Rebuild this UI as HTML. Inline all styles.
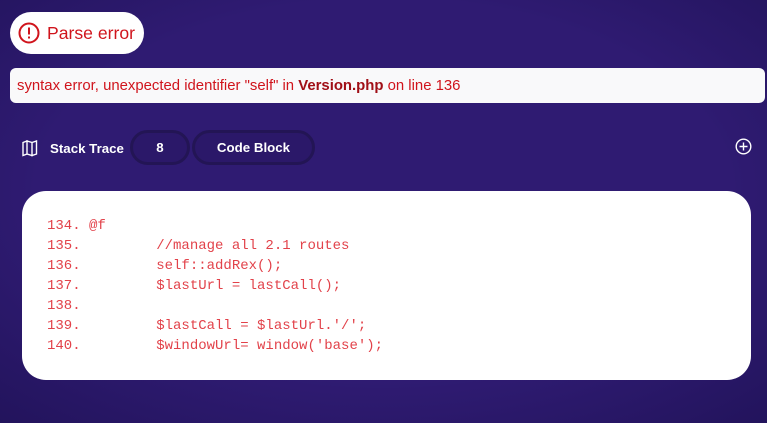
<!DOCTYPE html>
<html><head><style>
*{margin:0;padding:0;box-sizing:border-box}
body{width:767px;height:423px;overflow:hidden;background:#2f1b72;font-family:"Liberation Sans",sans-serif;position:relative}
.vig{position:absolute;inset:0;background:radial-gradient(ellipse 75% 75% at 50% 45%,rgba(0,0,0,0) 60%,rgba(10,5,50,0.35) 100%)}
.pe{position:absolute;left:10px;top:12px;width:134px;height:42px;background:#fff;border-radius:21px;color:#d0141c;font-size:17.6px}
.pe span{position:absolute;left:37px;top:11px}
.msg{position:absolute;left:10px;top:68px;width:755px;height:35px;background:#f9f9fa;border-radius:6px;color:#d0141c;font-size:14.9px;padding:10px 0 0 7px;white-space:nowrap}
.msg b{color:#a00f16}
.st{position:absolute;left:50px;top:141px;color:#fff;font-weight:bold;font-size:13.3px}
.pill{position:absolute;top:130px;height:35px;border-radius:18px;background:#2b1869;border:3px solid #231555;color:#fff;font-weight:bold;font-size:13.3px;text-align:center;line-height:29px}
.card{position:absolute;left:22px;top:191px;width:729px;height:189px;background:#fff;border-radius:24px}
pre{position:absolute;left:47px;top:216px;font-family:"Liberation Mono",monospace;font-size:14px;line-height:20px;color:#e2424a}
</style></head><body>
<div class="vig"></div>
<div class="pe"><svg style="position:absolute;left:8px;top:10px" width="22" height="22" viewBox="0 0 22 22"><circle cx="11" cy="11" r="9.5" fill="none" stroke="#d0141c" stroke-width="2"/><rect x="10" y="5.5" width="2" height="7" fill="#d0141c"/><rect x="10" y="14.5" width="2" height="2" fill="#d0141c"/></svg><span>Parse error</span></div>
<div class="msg">syntax error, unexpected identifier "self" in <b>Version.php</b> on line 136</div>
<svg style="position:absolute;left:21px;top:139px" width="18" height="18" viewBox="0 0 18 18" fill="none" stroke="#fff" stroke-width="1.4"><path d="M2 3.5L6 2v13l-4 1.5zM6 2l5 1.5v13L6 15zM11 3.5L15.5 2v13l-4.5 1.5z"/></svg>
<div class="st">Stack Trace</div>
<div class="pill" style="left:130px;width:60px">8</div>
<div class="pill" style="left:192px;width:123px">Code Block</div>
<svg style="position:absolute;left:735px;top:138px" width="17" height="17" viewBox="0 0 17 17" fill="none" stroke="#fff" stroke-width="1.4"><circle cx="8.5" cy="8.5" r="7.3"/><path d="M8.5 4.5v8M4.5 8.5h8"/></svg>
<div class="card"></div>
<pre>134. @f
135.         //manage all 2.1 routes
136.         self::addRex();
137.         $lastUrl = lastCall();
138.
139.         $lastCall = $lastUrl.'/';
140.         $windowUrl= window('base');</pre>
</body></html>
